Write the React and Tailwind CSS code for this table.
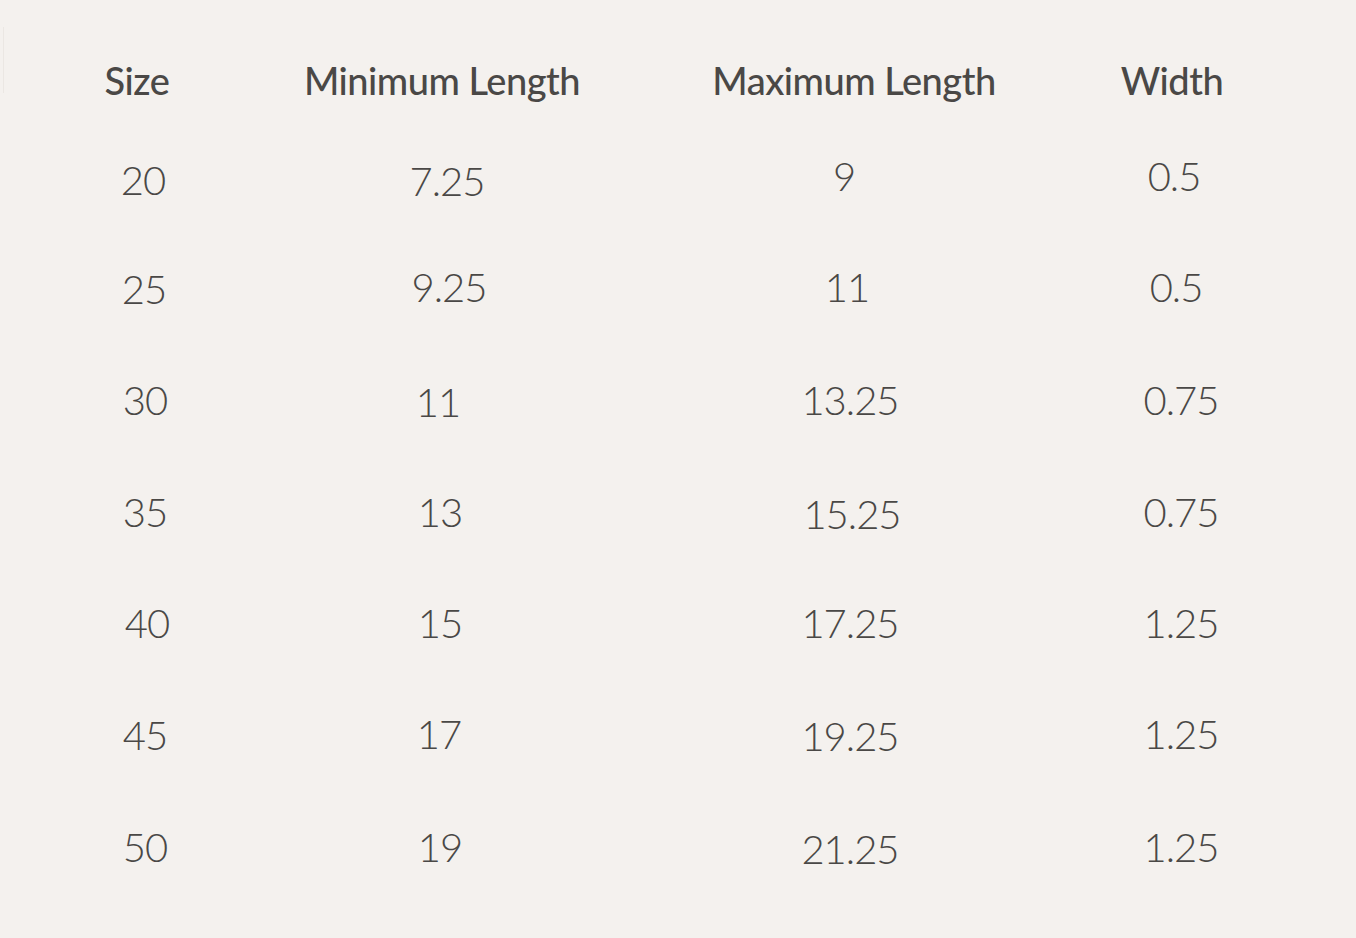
const headers = [
  { label: 'Size', cls: 'pr-[16px]' },
  { label: 'Minimum Length', cls: 'pl-[4px]' },
  { label: 'Maximum Length', cls: 'pl-[8px]' },
  { label: 'Width', cls: 'pr-[18px]' },
];

// each row: [size, min, max, width] with small nudges so it sits like the original chart
const rows = [
  [
    { v: '20', cls: 'pr-[4px]' },
    { v: '7.25', cls: 'pl-[14px] mt-[2px]' },
    { v: '9', cls: 'pr-[12px] mb-[8px]' },
    { v: '0.5', cls: 'pr-[14px] mb-[8px]' },
  ],
  [
    { v: '25', cls: 'pr-[2px] mt-[4px]' },
    { v: '9.25', cls: 'pl-[18px]' },
    { v: '11', cls: 'pr-[6px]' },
    { v: '0.5', cls: 'pr-[10px]' },
  ],
  [
    { v: '30', cls: '' },
    { v: '11', cls: 'pr-[4px] mt-[4px]' },
    { v: '13.25', cls: '' },
    { v: '0.75', cls: '' },
  ],
  [
    { v: '35', cls: '' },
    { v: '13', cls: '' },
    { v: '15.25', cls: 'pl-[4px] mt-[4px]' },
    { v: '0.75', cls: '' },
  ],
  [
    { v: '40', cls: 'pl-[4px]' },
    { v: '15', cls: '' },
    { v: '17.25', cls: '' },
    { v: '1.25', cls: '' },
  ],
  [
    { v: '45', cls: '' },
    { v: '17', cls: 'pr-[2px] mb-[2px]' },
    { v: '19.25', cls: 'mt-[2px]' },
    { v: '1.25', cls: 'mb-[2px]' },
  ],
  [
    { v: '50', cls: '' },
    { v: '19', cls: '' },
    { v: '21.25', cls: 'mt-[4px]' },
    { v: '1.25', cls: '' },
  ],
];

const App = () => {
  return (
    <div className="min-h-[938px] w-full bg-[#f4f1ee] text-[#4a4846] font-['Lato','Liberation_Sans',sans-serif]">
      <div className="grid grid-cols-[4px_282px_308px_512px_150px] grid-rows-[100px_100px_114px_112px_112px_110px_114px_110px] pt-[30px]">
        {/* header */}
        <div className="flex items-start">
          <div className="ml-[3px] mt-[-3px] h-[66px] w-px bg-[#ebe7e3]"></div>
        </div>
        {headers.map((h) => (
          <div key={h.label} className={`flex items-center justify-center ${h.cls}`}>
            <span className="text-[38px] font-medium tracking-[-0.5px] leading-[48px]">{h.label}</span>
          </div>
        ))}

        {rows.map((row, i) => (
          <div key={i} className="contents">
            <div></div>
            {row.map((cell, j) => (
              <div key={j} className="flex items-center justify-center">
                <span className={`text-[40px] font-light tracking-[-1px] leading-[48px] ${cell.cls}`}>{cell.v}</span>
              </div>
            ))}
          </div>
        ))}
      </div>
    </div>
  );
};

export default App;
